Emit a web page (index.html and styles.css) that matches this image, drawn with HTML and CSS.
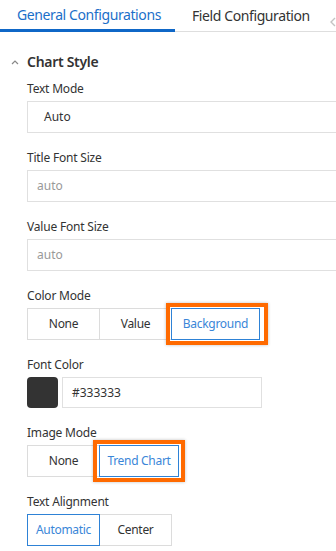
FILE: index.html
```html
<!DOCTYPE html>
<html lang="en">
<head>
  <meta charset="UTF-8">
  <title>Chart Settings</title>
  <link rel="stylesheet" href="styles.css">
</head>
<body>
  <div class="tabs">
    <div class="tab active">General Configurations</div>
    <div class="tab">Field Configuration</div>
    <div class="tab-nav">
      <svg width="8" height="10" viewBox="0 0 8 10"><path d="M6 1 L2 5 L6 9" fill="none" stroke="#c4c4c4" stroke-width="1.4"/></svg>
    </div>
  </div>

  <div class="section">
    <div class="section-head">
      <svg class="caret" width="8" height="6" viewBox="0 0 8 6"><path d="M1 5 L4 2 L7 5" fill="none" stroke="#888" stroke-width="1.2"/></svg>
      <span>Chart Style</span>
    </div>

    <div class="field">
      <label>Text Mode</label>
      <div class="input dark">Auto</div>
    </div>

    <div class="field">
      <label>Title Font Size</label>
      <div class="input muted">auto</div>
    </div>

    <div class="field">
      <label>Value Font Size</label>
      <div class="input muted">auto</div>
    </div>

    <div class="field">
      <label>Color Mode</label>
      <div class="segmented">
        <div class="seg">None</div>
        <div class="seg">Value</div>
        <div class="seg selected marked seg-bg">Background</div>
      </div>
    </div>

    <div class="field">
      <label>Font Color</label>
      <div class="color-row">
        <div class="swatch"></div>
        <div class="color-input">#333333</div>
      </div>
    </div>

    <div class="field">
      <label>Image Mode</label>
      <div class="segmented">
        <div class="seg">None</div>
        <div class="seg selected marked seg-trend">Trend Chart</div>
      </div>
    </div>

    <div class="field">
      <label>Text Alignment</label>
      <div class="segmented">
        <div class="seg selected">Automatic</div>
        <div class="seg">Center</div>
      </div>
    </div>
  </div>
</body>
</html>
```

FILE: styles.css
```css
* {
  margin: 0;
  padding: 0;
  box-sizing: border-box;
}

body {
  font-family: 'Noto Sans', 'Open Sans', sans-serif;
  color: #333;
  background: #fff;
  width: 336px;
  height: 551px;
  overflow: hidden;
}

.tabs {
  display: flex;
  height: 32px;
  border-bottom: 1px solid #dedede;
  position: relative;
}

.tab {
  font-size: 14px;
  line-height: 31px;
  padding: 0 16px 0 17px;
  color: #333;
  white-space: nowrap;
  letter-spacing: -0.4px;
}

.tab.active {
  color: #1b6fc9;
  border-bottom: 3px solid #0f67c7;
  width: 175px;
  height: 32px;
  margin-bottom: -1px;
  line-height: 29px;
}

.tab-nav {
  position: absolute;
  left: 329px;
  top: 10px;
}

.section {
  padding: 19px 0 0 27px;
}

.section-head {
  display: flex;
  align-items: center;
  height: 20px;
  margin-left: -16px;
  margin-bottom: 8px;
  font-size: 14px;
  font-weight: 600;
  color: #333;
  letter-spacing: -0.3px;
}

.caret {
  margin-right: 8px;
  margin-top: 2px;
}

.field {
  margin-bottom: 15px;
}

label {
  display: block;
  font-size: 12px;
  line-height: 20px;
  margin-bottom: 2px;
  color: #333;
  letter-spacing: -0.2px;
}

.input {
  height: 32px;
  width: 330px;
  border: 1px solid #e0e0e0;
  font-size: 12px;
  line-height: 30px;
  padding-left: 9px;
}

.input.dark {
  color: #333;
  padding-left: 16px;
}

.input.muted {
  color: #999;
}

.segmented {
  display: flex;
  height: 32px;
}

.seg {
  position: relative;
  width: 73px;
  border: 1px solid #dcdcdc;
  margin-right: -1px;
  font-size: 12px;
  line-height: 30px;
  text-align: center;
  color: #333;
  white-space: nowrap;
  letter-spacing: -0.3px;
}

.seg.selected {
  color: #3a86d8;
  border-color: #2e82d6;
  z-index: 1;
}

.seg-bg {
  width: 89px;
}

.seg-trend {
  width: 80px;
}

.marked::after {
  content: '';
  position: absolute;
  border: 4px solid #ff6a00;
  box-shadow: 0 0 3px rgba(0, 0, 0, 0.25);
}

.seg-bg::after {
  top: -6px;
  bottom: -6px;
  left: -6px;
  right: -9px;
}

.seg-trend::after {
  top: -6px;
  bottom: -6px;
  left: -7px;
  right: -7px;
}

.color-row {
  display: flex;
  align-items: center;
  height: 31px;
}

.swatch {
  width: 31px;
  height: 31px;
  background: #333;
  border-radius: 4px;
  margin-right: 4px;
}

.color-input {
  width: 200px;
  height: 31px;
  border: 1px solid #e0e0e0;
  font-size: 12px;
  line-height: 29px;
  padding-left: 9px;
  color: #333;
}
```
